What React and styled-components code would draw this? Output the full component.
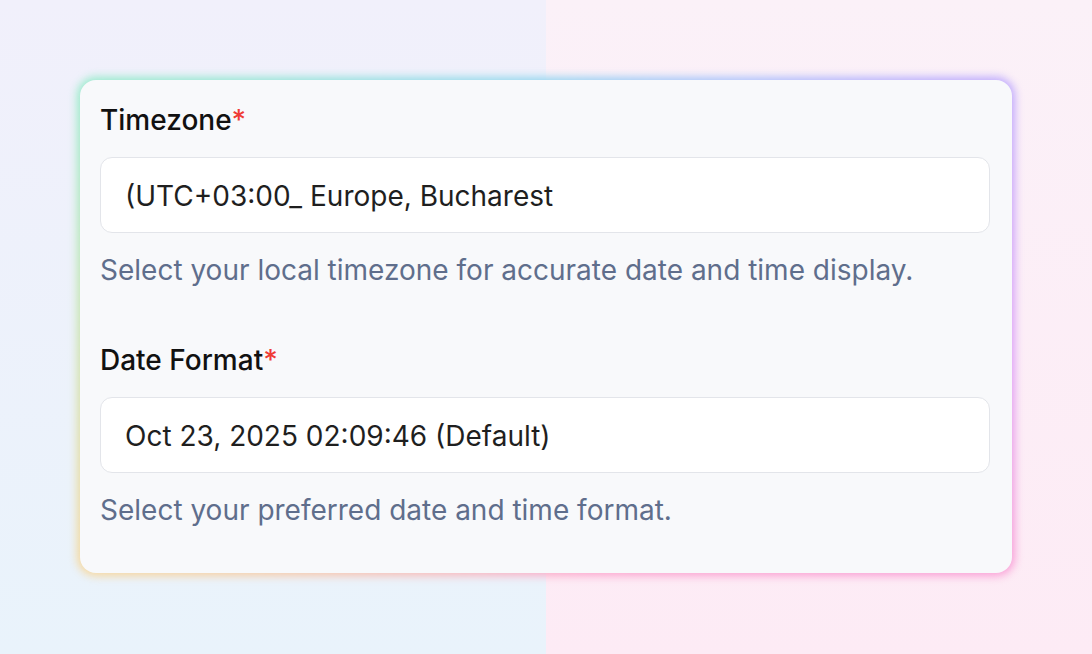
import React from "react";
import styled, { createGlobalStyle } from "styled-components";

const GlobalStyle = createGlobalStyle`
  html, body {
    margin: 0;
    padding: 0;
  }
  body {
    font-family: Inter, "Noto Sans", "Liberation Sans", sans-serif;
    -webkit-font-smoothing: antialiased;
  }
`;

const Page = styled.div`
  width: 1092px;
  height: 654px;
  box-sizing: border-box;
  padding: 80px 0 0 80px;
  isolation: isolate;
  background:
    linear-gradient(180deg, #f1f0fb 0%, #e9f3fb 100%) left / 546px 100% no-repeat,
    linear-gradient(180deg, #fbf1f8 0%, #fdebf5 100%) right / 546px 100% no-repeat;
`;

const Card = styled.div`
  position: relative;
  width: 932px;
  box-sizing: border-box;
  padding: 20px 22px 45px 20px;
  border-radius: 16px;
  background: #f8f9fb;
  display: flex;
  flex-direction: column;
  gap: 52px;

  /* coloured glow around the card */
  &::before {
    content: "";
    position: absolute;
    inset: -3px;
    border-radius: 19px;
    z-index: -1;
    filter: blur(4px);
    background: conic-gradient(
      from 0deg,
      #97d6f0 0deg,
      #aec2fc 40deg,
      #bfaafd 62deg,
      #e0a2f7 95deg,
      #fa9fd6 118deg,
      #fca8cf 170deg,
      #f8c0b4 215deg,
      #f7d89e 242deg,
      #c2e6b4 275deg,
      #98ebcc 298deg,
      #97dde6 330deg,
      #97d6f0 360deg
    );
  }
`;

const Field = styled.div`
  display: flex;
  flex-direction: column;
`;

const Label = styled.label`
  font-size: 28px;
  line-height: 40px;
  font-weight: 500;
  color: #111111;
  margin-bottom: 17px;
`;

const Required = styled.span`
  color: #ef3b36;
`;

const Input = styled.div`
  height: 76px;
  box-sizing: border-box;
  display: flex;
  align-items: center;
  padding: 2px 24px 0;
  background: #ffffff;
  border: 1px solid #e3e5ea;
  border-radius: 12px;
  font-size: 28px;
  color: #1f1f1f;
`;

const Help = styled.p`
  margin: 19px 0 0;
  font-size: 28px;
  line-height: 36px;
  color: #5f6e8c;
`;

const fields = [
  {
    label: "Timezone",
    value: "(UTC+03:00_ Europe, Bucharest",
    help: "Select your local timezone for accurate date and time display.",
  },
  {
    label: "Date Format",
    value: "Oct 23, 2025 02:09:46 (Default)",
    help: "Select your preferred date and time format.",
  },
];

const App = () => {
  return (
    <>
      <GlobalStyle />
      <Page>
        <Card>
          {fields.map((f) => (
            <Field key={f.label}>
              <Label>
                {f.label}
                <Required>*</Required>
              </Label>
              <Input>{f.value}</Input>
              <Help>{f.help}</Help>
            </Field>
          ))}
        </Card>
      </Page>
    </>
  );
};

export default App;
